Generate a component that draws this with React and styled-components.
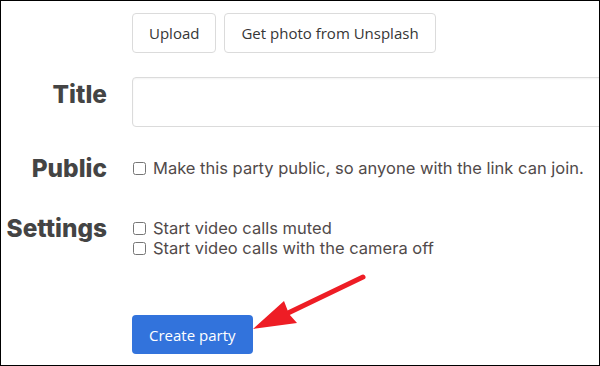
import React from 'react';
import styled, { createGlobalStyle } from 'styled-components';

const GlobalStyle = createGlobalStyle`
  html, body {
    margin: 0;
    padding: 0;
    background: #fff;
  }
`;

const Frame = styled.div`
  position: relative;
  width: 600px;
  height: 366px;
  box-sizing: border-box;
  border: 1px solid #000;
  overflow: hidden;
  background: #fff;
  padding-top: 12px;
`;

const Row = styled.div`
  display: flex;
  align-items: flex-start;
  margin-bottom: ${(p) => p.gap || 0}px;
`;

const Label = styled.div`
  flex: 0 0 106px;
  text-align: right;
  font-family: Inter, "Noto Sans", sans-serif;
  font-weight: 800;
  font-size: 24.4px;
  line-height: 30px;
  color: #444;
  padding-top: ${(p) => p.offset || 0}px;
`;

const Control = styled.div`
  margin-left: 25px;
  display: flex;
  flex-direction: ${(p) => (p.column ? 'column' : 'row')};
  gap: ${(p) => (p.column ? 0 : 8)}px;
  padding-top: ${(p) => p.offset || 0}px;
`;

const Button = styled.button`
  height: 40px;
  padding: 0 16px;
  font-family: "Open Sans", "Noto Sans", sans-serif;
  font-size: 15px;
  color: #363636;
  background: #fff;
  border: 1px solid #dbdbdb;
  border-radius: 4px;
  cursor: pointer;
`;

const PrimaryButton = styled(Button)`
  height: 39px;
  padding: 0 16px;
  background: #3273dc;
  border-color: transparent;
  color: #fff;
`;

const TextInput = styled.input`
  width: 520px;
  height: 50px;
  box-sizing: border-box;
  border: 1px solid #dbdbdb;
  border-radius: 4px;
  box-shadow: inset 0 1px 2px rgba(10, 10, 10, 0.05);
  font-size: 16px;
  padding: 0 12px;
`;

const Check = styled.label`
  display: flex;
  align-items: center;
  font-family: Inter, "Noto Sans", sans-serif;
  font-size: 16.5px;
  line-height: 20px;
  color: #514a4a;
  white-space: nowrap;

  input {
    width: 13px;
    height: 13px;
    margin: 0 7px 0 1px;
  }
`;

const Arrow = styled.svg`
  position: absolute;
  left: 0;
  top: 0;
  pointer-events: none;
`;

export default function App() {
  return (
    <>
      <GlobalStyle />
      <Frame>
        <Row gap={24}>
          <Label />
          <Control>
            <Button>Upload</Button>
            <Button>Get photo from Unsplash</Button>
          </Control>
        </Row>
        <Row gap={26}>
          <Label offset={2}>Title</Label>
          <Control>
            <TextInput type="text" />
          </Control>
        </Row>
        <Row gap={30}>
          <Label>Public</Label>
          <Control offset={5}>
            <Check>
              <input type="checkbox" />
              Make this party public, so anyone with the link can join.
            </Check>
          </Control>
        </Row>
        <Row gap={57}>
          <Label>Settings</Label>
          <Control column offset={5}>
            <Check>
              <input type="checkbox" />
              Start video calls muted
            </Check>
            <Check>
              <input type="checkbox" />
              Start video calls with the camera off
            </Check>
          </Control>
        </Row>
        <Row>
          <Label />
          <Control>
            <PrimaryButton>Create party</PrimaryButton>
          </Control>
        </Row>
        <Arrow width="600" height="366" viewBox="0 0 600 366">
          <line x1="362" y1="276" x2="285" y2="313" stroke="#ee1d25" strokeWidth="5" strokeLinecap="round" />
          <polygon points="252,328 283,300 288,313 296,322" fill="#ee1d25" />
        </Arrow>
      </Frame>
    </>
  );
}
